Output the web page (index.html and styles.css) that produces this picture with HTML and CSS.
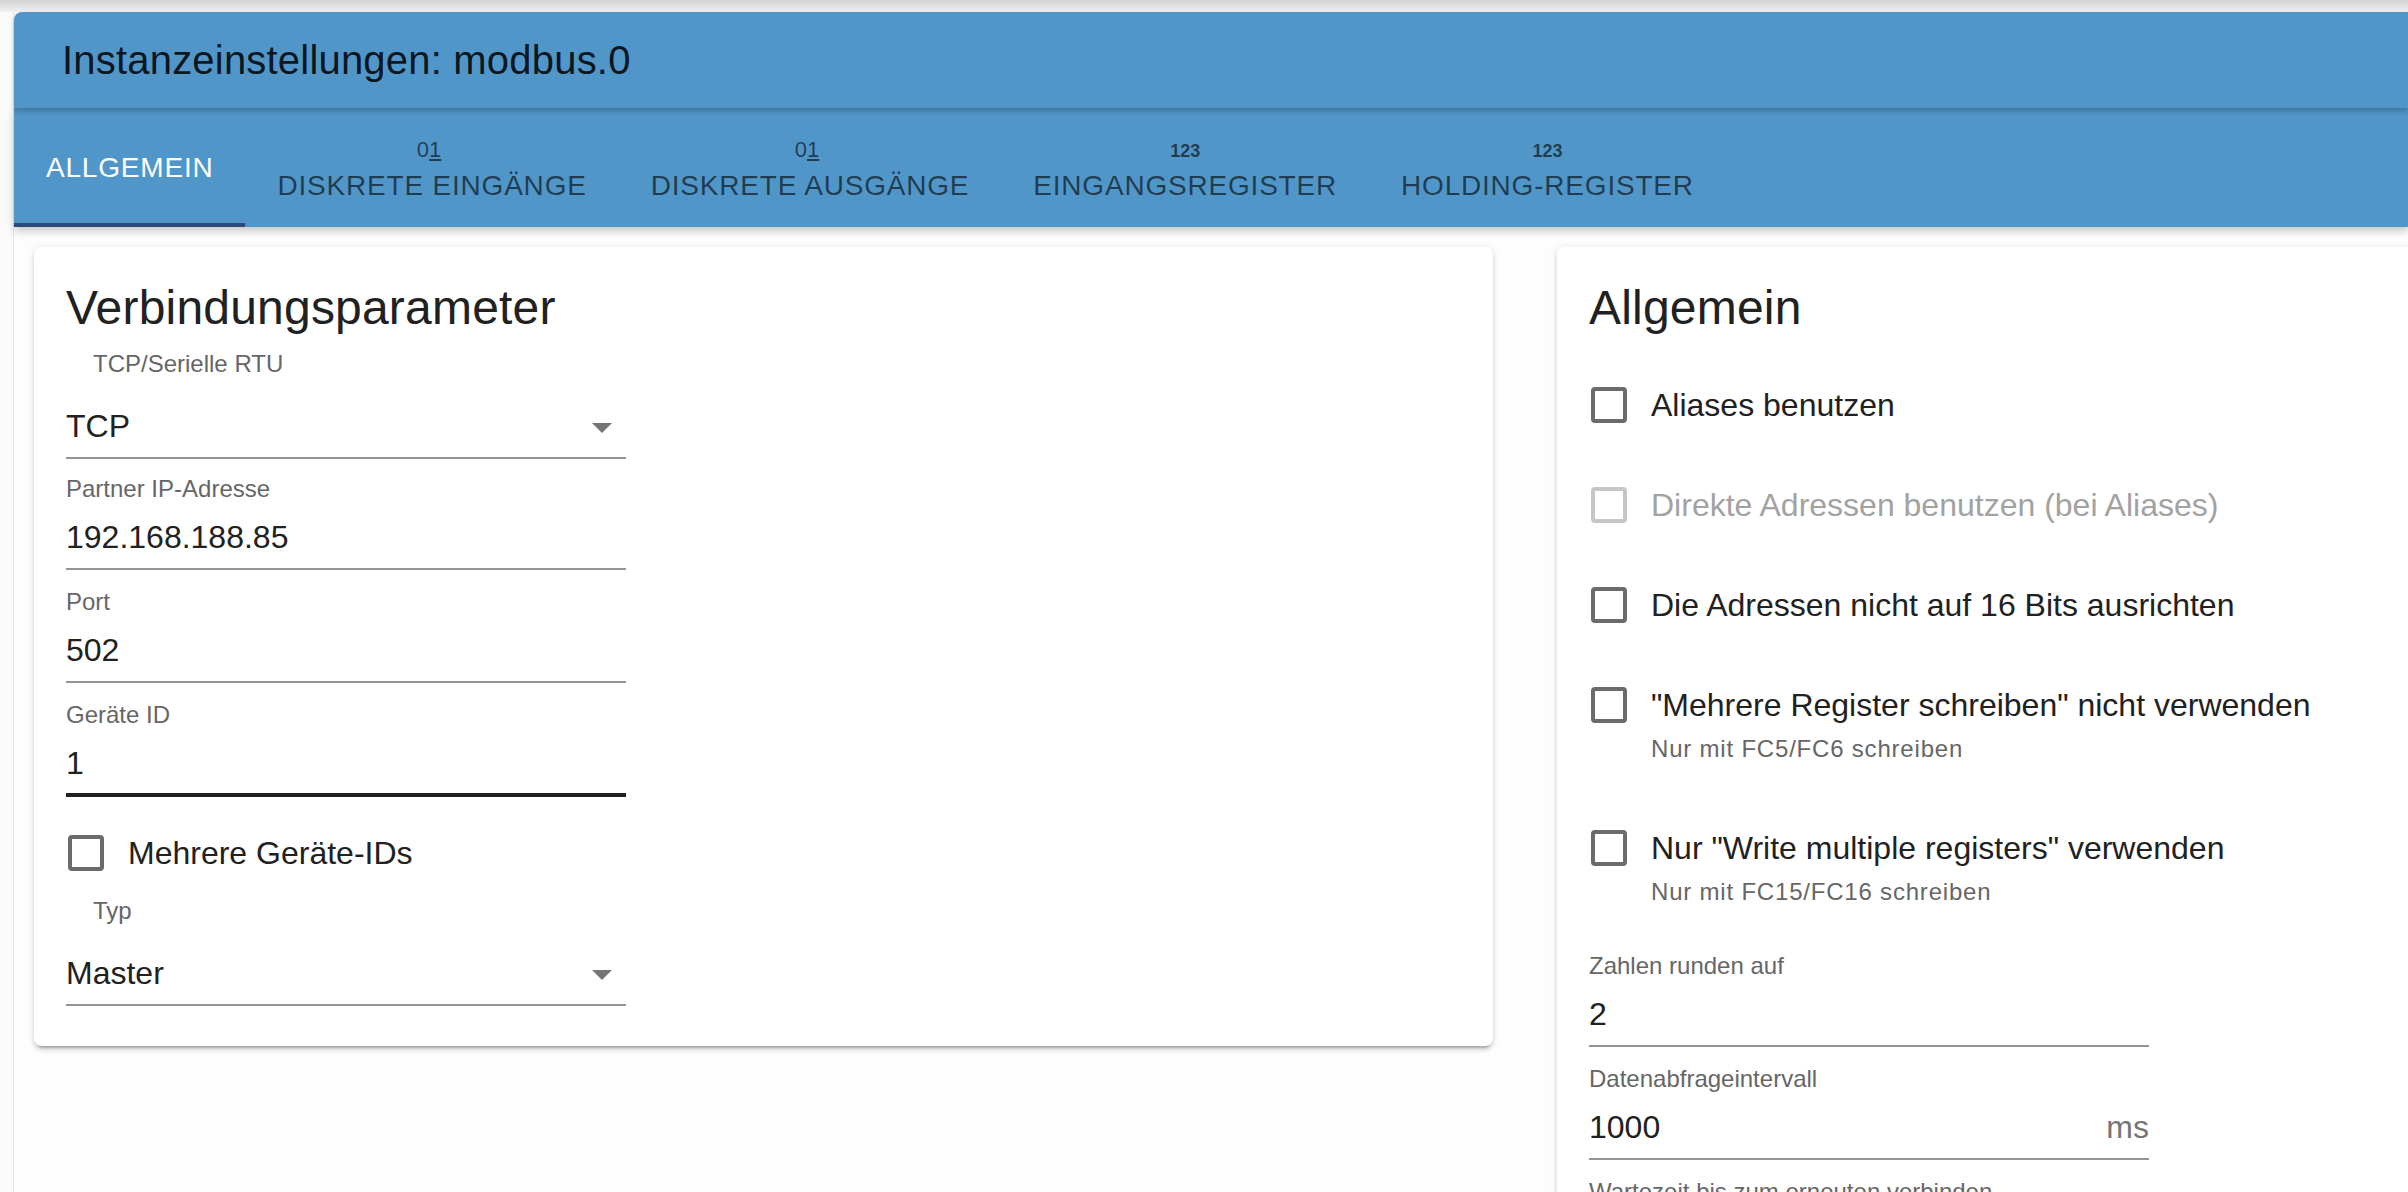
FILE: index.html
```html
<!DOCTYPE html>
<html lang="de">
<head>
<meta charset="utf-8">
<title>Instanzeinstellungen: modbus.0</title>
<link rel="stylesheet" href="styles.css">
</head>
<body>
<div class="topshade"></div>
<div class="app">
  <header class="titlebar">Instanzeinstellungen: modbus.0</header>
  <nav class="tabs">
    <div class="tab active"><span class="tab-label">Allgemein</span></div>
    <div class="tab"><span class="tab-icon"><span>0</span><span class="ul">1</span></span><span class="tab-label">Diskrete Eingänge</span></div>
    <div class="tab"><span class="tab-icon"><span>0</span><span class="ul">1</span></span><span class="tab-label">Diskrete Ausgänge</span></div>
    <div class="tab"><span class="tab-icon num">123</span><span class="tab-label">Eingangsregister</span></div>
    <div class="tab"><span class="tab-icon num">123</span><span class="tab-label">Holding-Register</span></div>
  </nav>
  <main class="content">
    <section class="card card-left">
      <h2 class="card-title">Verbindungsparameter</h2>
      <div class="select-field">
        <div class="sel-label">TCP/Serielle RTU</div>
        <div class="sel-input"><span>TCP</span><svg class="arrow" width="20" height="10" viewBox="0 0 20 10"><path d="M0 0 L10 10 L20 0 Z" fill="#757575"/></svg></div>
      </div>
      <div class="field field-first">
        <div class="field-label">Partner IP-Adresse</div>
        <div class="field-input"><span>192.168.188.85</span></div>
      </div>
      <div class="field">
        <div class="field-label">Port</div>
        <div class="field-input"><span>502</span></div>
      </div>
      <div class="field">
        <div class="field-label">Geräte ID</div>
        <div class="field-input focused"><span>1</span></div>
      </div>
      <div class="cb-row cb-left">
        <span class="cb"><span class="cb-box"></span></span>
        <span class="cb-text">Mehrere Geräte-IDs</span>
      </div>
      <div class="select-field select-typ">
        <div class="sel-label">Typ</div>
        <div class="sel-input"><span>Master</span><svg class="arrow" width="20" height="10" viewBox="0 0 20 10"><path d="M0 0 L10 10 L20 0 Z" fill="#757575"/></svg></div>
      </div>
    </section>
    <section class="card card-right">
      <h2 class="card-title">Allgemein</h2>
      <div class="cb-row cb-first">
        <span class="cb"><span class="cb-box"></span></span>
        <span class="cb-text">Aliases benutzen</span>
      </div>
      <div class="cb-row disabled">
        <span class="cb"><span class="cb-box"></span></span>
        <span class="cb-text">Direkte Adressen benutzen (bei Aliases)</span>
      </div>
      <div class="cb-row">
        <span class="cb"><span class="cb-box"></span></span>
        <span class="cb-text">Die Adressen nicht auf 16 Bits ausrichten</span>
      </div>
      <div class="cb-row">
        <span class="cb"><span class="cb-box"></span></span>
        <span class="cb-text">"Mehrere Register schreiben" nicht verwenden</span>
      </div>
      <div class="helper">Nur mit FC5/FC6 schreiben</div>
      <div class="cb-row cb-after-helper">
        <span class="cb"><span class="cb-box"></span></span>
        <span class="cb-text">Nur "Write multiple registers" verwenden</span>
      </div>
      <div class="helper">Nur mit FC15/FC16 schreiben</div>
      <div class="field field-after-helper">
        <div class="field-label">Zahlen runden auf</div>
        <div class="field-input"><span>2</span></div>
      </div>
      <div class="field">
        <div class="field-label">Datenabfrageintervall</div>
        <div class="field-input"><span>1000</span><span class="adorn">ms</span></div>
      </div>
      <div class="field">
        <div class="field-label">Wartezeit bis zum erneuten verbinden</div>
        <div class="field-input"><span>10000</span><span class="adorn">ms</span></div>
      </div>
    </section>
  </main>
</div>
</body>
</html>
```
FILE: styles.css
```css
html, body {
  margin: 0;
  height: 100%;
  overflow: hidden;
}

body {
  background: #fafafa;
  font-family: "Liberation Sans", Arial, Helvetica, sans-serif;
  color: #212121;
}

.topshade {
  height: 12px;
  background: linear-gradient(#d4d4d4, #f0f0f0);
}

.app {
  margin-left: 13px;
  border-left: 1px solid #e3e3e3;
  background: #fdfdfd;
  height: 1180px;
}

.titlebar {
  position: relative;
  z-index: 2;
  height: 96px;
  background: #5196c8;
  border-top-left-radius: 8px;
  padding-left: 48px;
  font-size: 40px;
  letter-spacing: 0.2px;
  line-height: 96px;
  color: rgba(0, 0, 0, 0.87);
  box-shadow: 0 3px 5px rgba(0, 0, 0, 0.22);
}

.tabs {
  position: relative;
  z-index: 1;
  display: flex;
  height: 119px;
  background: #5196c8;
  box-shadow: 0 4px 8px rgba(0, 0, 0, 0.22);
}

.tab {
  display: flex;
  flex-direction: column;
  align-items: center;
  justify-content: center;
  padding: 0 32px;
  color: rgba(0, 0, 0, 0.6);
  font-size: 28px;
  letter-spacing: 0.8px;
  text-transform: uppercase;
}

.tab.active {
  color: #fff;
  box-shadow: inset 0 -4px 0 #2b4a78;
}

.tab-label {
  line-height: 35px;
  white-space: nowrap;
}

.tab-icon {
  height: 36px;
  line-height: 36px;
  font-size: 22px;
  letter-spacing: 0;
  margin-right: 6px;
}

.tab-icon.num {
  font-size: 18px;
  font-weight: 700;
  padding-top: 2px;
  height: 34px;
  line-height: 34px;
  margin-right: 0;
}

.tab-icon .ul {
  text-decoration: underline;
  text-decoration-thickness: 2px;
  text-underline-offset: 2px;
}

.content {
  display: flex;
  align-items: flex-start;
  gap: 64px;
  padding: 20px 0 0 20px;
}

.card {
  flex: none;
  box-sizing: border-box;
  background: #fff;
  border-radius: 8px;
  padding: 29px 32px 40px;
  box-shadow: 0 4px 4px rgba(0, 0, 0, 0.12), 0 6px 2px -4px rgba(0, 0, 0, 0.2), 0 1px 8px rgba(0, 0, 0, 0.1);
}

.card-left {
  width: 1459px;
}

.card-right {
  width: 900px;
  min-height: 1300px;
}

.card-title {
  margin: 0;
  font-size: 48px;
  line-height: 64px;
  font-weight: 400;
  letter-spacing: 0.2px;
  color: #212121;
}

.select-field {
  width: 560px;
  margin-top: 12px;
}

.select-typ {
  margin-top: 4px;
}

.sel-label {
  margin-left: 27px;
  font-size: 24px;
  line-height: 24px;
  color: #666;
}

.sel-input {
  margin-top: 30px;
  display: flex;
  align-items: center;
  justify-content: space-between;
  font-size: 32px;
  line-height: 40px;
  padding-bottom: 11px;
  border-bottom: 2px solid #949494;
}

.arrow {
  margin-right: 14px;
  margin-top: 4px;
}

.field {
  width: 560px;
  margin-top: 20px;
}

.field-first {
  margin-top: 18px;
}

.field-after-helper {
  margin-top: 46px;
}

.field-label {
  font-size: 24px;
  line-height: 24px;
  color: #666;
  white-space: nowrap;
}

.field-input {
  margin-top: 16px;
  display: flex;
  justify-content: space-between;
  font-size: 32px;
  line-height: 40px;
  padding-bottom: 11px;
  border-bottom: 2px solid #949494;
}

.field-input.focused {
  padding-bottom: 10px;
  border-bottom: 4px solid #212121;
}

.adorn {
  color: #757575;
}

.cb-row {
  display: flex;
  align-items: center;
  height: 84px;
  margin-top: 16px;
}

.cb-first {
  margin-top: 23px;
}

.cb-left {
  margin-top: 14px;
}

.cb-after-helper {
  margin-top: 41px;
}

.cb {
  flex: none;
  width: 84px;
  height: 84px;
  margin-left: -22px;
  display: flex;
  align-items: center;
  justify-content: center;
}

.cb-box {
  box-sizing: border-box;
  width: 36px;
  height: 36px;
  border: 4px solid #6b6b6b;
  border-radius: 4px;
}

.cb-text {
  font-size: 32px;
  line-height: 48px;
  color: #212121;
  white-space: nowrap;
}

.disabled .cb-box {
  border-color: #c6c6c6;
}

.disabled .cb-text {
  color: #a2a2a2;
}

.helper {
  margin-top: -14px;
  margin-left: 62px;
  font-size: 24px;
  line-height: 32px;
  letter-spacing: 0.8px;
  color: #666;
}
```
